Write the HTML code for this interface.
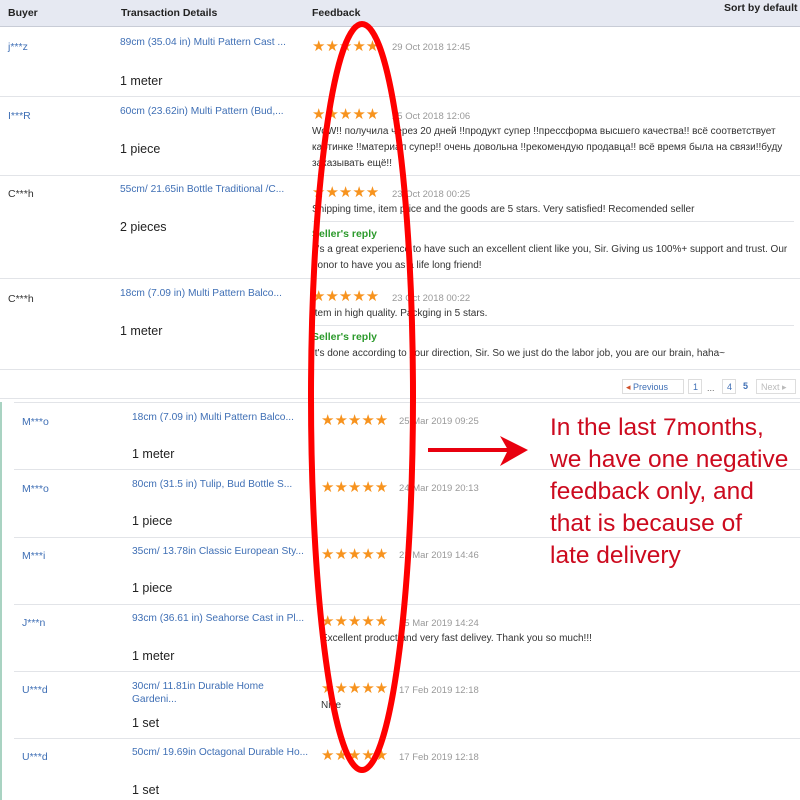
<!DOCTYPE html>
<html><head><meta charset="utf-8"><style>
*{margin:0;padding:0;box-sizing:border-box}
body{width:800px;height:800px;overflow:hidden;background:#fff;font-family:"Liberation Sans",Arial,sans-serif;position:relative}
.a{position:absolute;white-space:nowrap}
.hd{position:absolute;left:0;top:0;width:800px;height:27px;background:#e6e9f2;border-bottom:1px solid #c8ccd6}
.h{font-size:10.5px;font-weight:bold;color:#222}
.b{font-size:10.5px;color:#3f6fb5}
.bk{font-size:10.5px;color:#333}
.t{font-size:10.2px;color:#3f6fb5}
.q{font-size:12.5px;color:#222}
.s{font-size:15px;color:#f7931e;letter-spacing:0px;line-height:15px}
.d{font-size:9.5px;color:#999}
.f{font-size:10px;color:#333;line-height:16px}
.g{font-size:10.5px;font-weight:bold;color:#2c9a2c}
.ln{position:absolute;height:1px;background:#e2e4e8}
.r{font-size:24.5px;color:#cc0a1e;line-height:32px}
</style></head><body>
<div class="hd"></div>
<div class="a h" style="left:8px;top:7px">Buyer</div>
<div class="a h" style="left:121px;top:7px">Transaction Details</div>
<div class="a h" style="left:312px;top:7px">Feedback</div>
<div class="a h" style="left:724px;top:2px">Sort by default</div>

<div class="a b" style="left:8px;top:41px">j***z</div>
<div class="a t" style="left:120px;top:37px">89cm (35.04 in) Multi Pattern Cast ...</div>
<div class="a q" style="left:120px;top:74px">1 meter</div>
<div class="a s" style="left:312px;top:39px">★★★★★</div>
<div class="a d" style="left:392px;top:42px">29 Oct 2018 12:45</div>
<div class="ln" style="left:0;top:96px;width:800px"></div>

<div class="a b" style="left:8px;top:110px">I***R</div>
<div class="a t" style="left:120px;top:106px">60cm (23.62in) Multi Pattern (Bud,...</div>
<div class="a q" style="left:120px;top:142px">1 piece</div>
<div class="a s" style="left:312px;top:107px">★★★★★</div>
<div class="a d" style="left:392px;top:111px">25 Oct 2018 12:06</div>
<div class="a f" style="left:312px;top:124px">WoW!! получила через 20 дней !!продукт супер !!прессформа высшего качества!! всё соответствует<br>картинке !!материал супер!! очень довольна !!рекомендую продавца!! всё время была на связи!!буду<br>заказывать ещё!!</div>
<div class="ln" style="left:0;top:175px;width:800px"></div>

<div class="a bk" style="left:8px;top:188px">C***h</div>
<div class="a t" style="left:120px;top:184px">55cm/ 21.65in Bottle Traditional /C...</div>
<div class="a q" style="left:120px;top:220px">2 pieces</div>
<div class="a s" style="left:312px;top:185px">★★★★★</div>
<div class="a d" style="left:392px;top:189px">23 Oct 2018 00:25</div>
<div class="a f" style="left:312px;top:202px">Shipping time, item price and the goods are 5 stars. Very satisfied! Recomended seller</div>
<div class="ln" style="left:312px;top:221px;width:482px"></div>
<div class="a g" style="left:312px;top:228px">Seller's reply</div>
<div class="a f" style="left:312px;top:242px">It's a great experience to have such an excellent client like you, Sir. Giving us 100%+ support and trust. Our<br>honor to have you as a life long friend!</div>
<div class="ln" style="left:0;top:278px;width:800px"></div>

<div class="a bk" style="left:8px;top:293px">C***h</div>
<div class="a t" style="left:120px;top:288px">18cm (7.09 in) Multi Pattern Balco...</div>
<div class="a q" style="left:120px;top:324px">1 meter</div>
<div class="a s" style="left:312px;top:289px">★★★★★</div>
<div class="a d" style="left:392px;top:293px">23 Oct 2018 00:22</div>
<div class="a f" style="left:312px;top:306px">Item in high quality. Packging in 5 stars.</div>
<div class="ln" style="left:312px;top:325px;width:482px"></div>
<div class="a g" style="left:312px;top:331px">Seller's reply</div>
<div class="a f" style="left:312px;top:346px">It's done according to your direction, Sir. So we just do the labor job, you are our brain, haha~</div>
<div class="ln" style="left:0;top:369px;width:800px"></div>

<div class="a" style="left:622px;top:379px;width:62px;height:15px;border:1px solid #ddd;font-size:9px;color:#3f6fb5;padding:2px 0 0 3px"><span style="color:#d0502a">◂</span> Previous</div>
<div class="a" style="left:688px;top:379px;width:14px;height:15px;border:1px solid #ddd;font-size:9px;color:#3f6fb5;padding:2px 0 0 4px">1</div>
<div class="a" style="left:707px;top:383px;font-size:9px;color:#666">...</div>
<div class="a" style="left:722px;top:379px;width:14px;height:15px;border:1px solid #ddd;font-size:9px;color:#3f6fb5;padding:2px 0 0 4px">4</div>
<div class="a" style="left:743px;top:381px;font-size:9px;font-weight:bold;color:#3f6fb5">5</div>
<div class="a" style="left:756px;top:379px;width:40px;height:15px;border:1px solid #ddd;font-size:9px;color:#bbb;padding:2px 0 0 4px">Next ▸</div>
<div class="ln" style="left:0;top:398px;width:800px"></div>

<div class="a" style="left:0;top:402px;width:2px;height:398px;background:#a9d3c2"></div>
<div class="ln" style="left:14px;top:402px;width:786px"></div>
<div class="a b" style="left:22px;top:416px">M***o</div>
<div class="a t" style="left:132px;top:412px">18cm (7.09 in) Multi Pattern Balco...</div>
<div class="a q" style="left:132px;top:447px">1 meter</div>
<div class="a s" style="left:321px;top:413px">★★★★★</div>
<div class="a d" style="left:399px;top:416px">25 Mar 2019 09:25</div>
<div class="ln" style="left:14px;top:469px;width:786px"></div>

<div class="a b" style="left:22px;top:483px">M***o</div>
<div class="a t" style="left:132px;top:479px">80cm (31.5 in) Tulip, Bud Bottle S...</div>
<div class="a q" style="left:132px;top:514px">1 piece</div>
<div class="a s" style="left:321px;top:480px">★★★★★</div>
<div class="a d" style="left:399px;top:483px">24 Mar 2019 20:13</div>
<div class="ln" style="left:14px;top:537px;width:786px"></div>

<div class="a b" style="left:22px;top:550px">M***i</div>
<div class="a t" style="left:132px;top:546px">35cm/ 13.78in Classic European Sty...</div>
<div class="a q" style="left:132px;top:581px">1 piece</div>
<div class="a s" style="left:321px;top:547px">★★★★★</div>
<div class="a d" style="left:399px;top:550px">21 Mar 2019 14:46</div>
<div class="ln" style="left:14px;top:604px;width:786px"></div>

<div class="a b" style="left:22px;top:617px">J***n</div>
<div class="a t" style="left:132px;top:613px">93cm (36.61 in) Seahorse Cast in Pl...</div>
<div class="a q" style="left:132px;top:649px">1 meter</div>
<div class="a s" style="left:321px;top:614px">★★★★★</div>
<div class="a d" style="left:399px;top:618px">15 Mar 2019 14:24</div>
<div class="a f" style="left:321px;top:631px">Excellent product and very fast delivey. Thank you so much!!!</div>
<div class="ln" style="left:14px;top:671px;width:786px"></div>

<div class="a b" style="left:22px;top:684px">U***d</div>
<div class="a t" style="left:132px;top:680px;line-height:13px">30cm/ 11.81in Durable Home<br>Gardeni...</div>
<div class="a q" style="left:132px;top:716px">1 set</div>
<div class="a s" style="left:321px;top:681px">★★★★★</div>
<div class="a d" style="left:399px;top:685px">17 Feb 2019 12:18</div>
<div class="a f" style="left:321px;top:698px">Nice</div>
<div class="ln" style="left:14px;top:738px;width:786px"></div>

<div class="a b" style="left:22px;top:751px">U***d</div>
<div class="a t" style="left:132px;top:747px">50cm/ 19.69in Octagonal Durable Ho...</div>
<div class="a q" style="left:132px;top:783px">1 set</div>
<div class="a s" style="left:321px;top:748px">★★★★★</div>
<div class="a d" style="left:399px;top:752px">17 Feb 2019 12:18</div>

<svg class="a" style="left:0;top:0" width="800" height="800">
<ellipse cx="362" cy="397" rx="51" ry="373" fill="none" stroke="#f00" stroke-width="6"/>
<path d="M428 450 L512 450" stroke="#e8000f" stroke-width="4" fill="none"/>
<path d="M500 436 L528 450 L500 466 L508 450 Z" fill="#e8000f"/>
</svg>
<div class="a r" style="left:550px;top:412px">In the last 7months,<br>we have one negative<br>feedback only, and<br>that is because of<br>late delivery</div>
</body></html>
